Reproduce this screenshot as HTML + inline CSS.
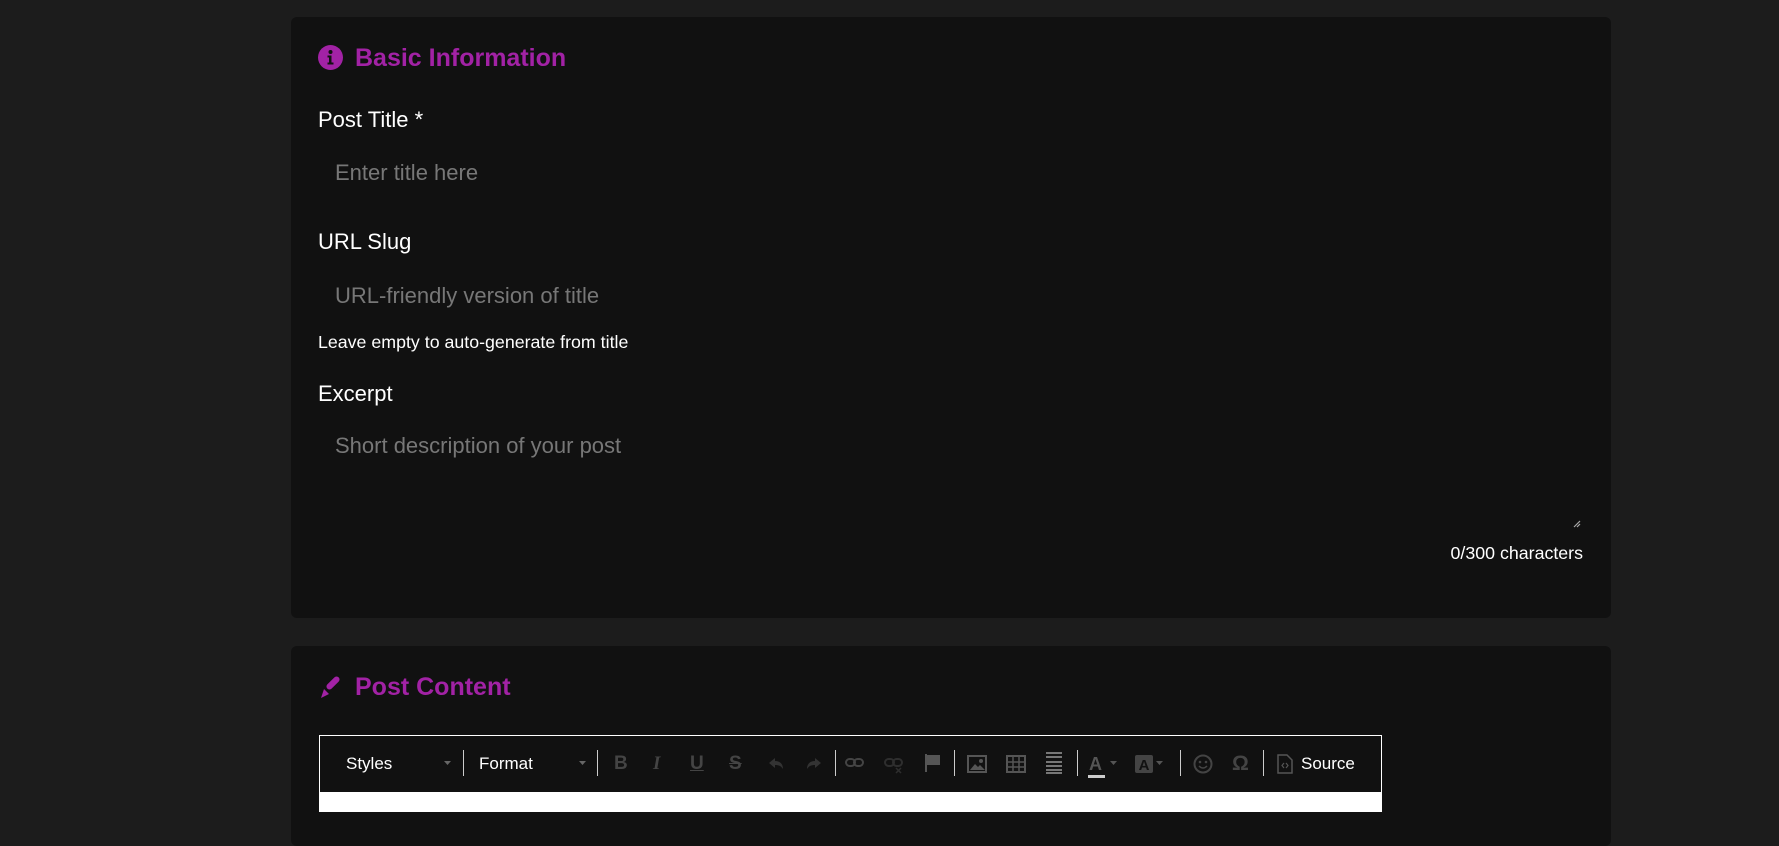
<!DOCTYPE html>
<html><head><meta charset="utf-8">
<style>
*{box-sizing:border-box;margin:0;padding:0}
html,body{width:1779px;height:797px;overflow:hidden;background:#1c1c1c;font-family:"Liberation Sans",Arial,sans-serif}
.card{position:absolute;left:291px;width:1320px;background:#111;border-radius:6px}
.h{position:absolute;left:27px;color:#a222a5;font-weight:bold;font-size:25px;line-height:28px}
.abs{position:absolute;white-space:nowrap}
.lbl{color:#fff;font-size:22px;left:27px}
.ph{color:#777;font-size:22px;left:44px}
.tb{position:absolute;left:28px;top:89px;width:1063px;height:60px;border-top:1px solid #fff;border-left:1px solid #fff;border-right:1px solid #fff;background:#111}
.tb .t{position:absolute;top:0;height:56px;line-height:56px;font-size:17px;color:#fff}
.sep{position:absolute;top:14px;width:1px;height:26px;background:#ccc}
.ic{position:absolute;top:16px}
.white{position:absolute;left:28px;top:146px;width:1063px;height:20px;background:#fff}
</style></head><body>
<div class="card" style="top:17px;height:601px">
  <svg class="abs" style="left:27px;top:28px" width="25" height="25" viewBox="0 0 25 25"><circle cx="12.5" cy="12.5" r="12.5" fill="#a222a5"/><circle cx="12.5" cy="7" r="2" fill="#111"/><path d="M9.5 10.5h4v7h2v2h-6v-2h1.5v-5h-1.5z" fill="#111"/></svg>
  <div class="h" style="top:27px;left:64px">Basic Information</div>
  <div class="abs lbl" style="top:90px">Post Title *</div>
  <div class="abs ph" style="top:143px">Enter title here</div>
  <div class="abs lbl" style="top:212px">URL Slug</div>
  <div class="abs ph" style="top:266px">URL-friendly version of title</div>
  <div class="abs" style="left:27px;top:315px;color:#fff;font-size:17.8px">Leave empty to auto-generate from title</div>
  <div class="abs lbl" style="top:364px">Excerpt</div>
  <div class="abs ph" style="top:416px">Short description of your post</div>
  <svg class="abs" style="left:1282px;top:503px" width="8" height="8"><path d="M1 7L7 1M4 7L7 4" stroke="#aaa" stroke-width="1.2"/></svg>
  <div class="abs" style="right:28px;top:526px;color:#fff;font-size:17.8px">0/300 characters</div>
</div>
<div class="card" style="top:646px;height:200px">
  <svg class="abs" style="left:27px;top:28px" width="26" height="26" viewBox="0 0 26 26"><rect x="12" y="1" width="6" height="16" rx="3" transform="rotate(45 15 9)" fill="#a222a5"/><path d="M3 24l3-9 5 5z" fill="#a222a5"/><path d="M9 16l3 3" stroke="#111" stroke-width="1.5"/></svg>
  <div class="h" style="top:27px;left:64px">Post Content</div>
  <div class="tb">
    <div class="t" style="left:26px">Styles</div>
    <svg class="ic" style="left:124px;top:25px" width="7" height="5"><path d="M0 0h7L3.5 4z" fill="#666"/></svg>
    <div class="sep" style="left:143px"></div>
    <div class="t" style="left:159px">Format</div>
    <svg class="ic" style="left:259px;top:25px" width="7" height="5"><path d="M0 0h7L3.5 4z" fill="#666"/></svg>
    <div class="sep" style="left:277px"></div>
    <div class="t" style="left:294px;color:#444;font-weight:bold;font-size:19px">B</div>
    <div class="t" style="left:333px;color:#444;font-style:italic;font-weight:bold;font-size:19px;font-family:'Liberation Serif',serif">I</div>
    <div class="t" style="left:370px;color:#444;font-weight:bold;font-size:19px;text-decoration:underline">U</div>
    <div class="t" style="left:409px;color:#444;font-weight:bold;font-size:19px;text-decoration:line-through">S</div>
    <svg class="ic" style="left:447px;top:20px" width="18" height="16"><path d="M2 7l6-5v3c5 0 8 3 8 8-2-3-4-4-8-4v3z" fill="#333"/></svg>
    <svg class="ic" style="left:485px;top:20px" width="18" height="16"><path d="M16 7l-6-5v3c-5 0-8 3-8 8 2-3 4-4 8-4v3z" fill="#333"/></svg>
    <div class="sep" style="left:515px"></div>
    <svg class="ic" style="left:525px;top:20px" width="20" height="14"><rect x="1" y="3" width="9" height="7" rx="3.5" stroke="#444" stroke-width="2" fill="none"/><rect x="9" y="3" width="9" height="7" rx="3.5" stroke="#444" stroke-width="2" fill="none"/></svg>
    <svg class="ic" style="left:564px;top:20px" width="20" height="18"><rect x="1" y="3" width="9" height="7" rx="3.5" stroke="#2e2e2e" stroke-width="2" fill="none"/><rect x="9" y="3" width="9" height="7" rx="3.5" stroke="#2e2e2e" stroke-width="2" fill="none"/><path d="M12 12l5 5M17 12l-5 5" stroke="#2e2e2e" stroke-width="1.5"/></svg>
    <svg class="ic" style="left:604px;top:17px" width="18" height="20"><path d="M2 1v18" stroke="#555" stroke-width="2"/><path d="M3 2h13v10H3z" fill="#555"/></svg>
    <div class="sep" style="left:634px"></div>
    <svg class="ic" style="left:647px;top:19px" width="20" height="18"><rect x="1" y="1" width="18" height="16" stroke="#555" stroke-width="2" fill="none"/><path d="M3 15l5-6 3 3 2-2 5 5z" fill="#555"/><circle cx="14" cy="6" r="2" fill="#555"/></svg>
    <svg class="ic" style="left:686px;top:19px" width="20" height="18"><rect x="1" y="1" width="18" height="16" stroke="#555" stroke-width="2" fill="none"/><path d="M1 7h18M1 12h18M7 1v16M13 1v16" stroke="#555" stroke-width="1.5"/></svg>
    <svg class="ic" style="left:725px;top:15px" width="18" height="24"><path d="M1 2h16M1 6h16M1 11h16M1 15h16M1 19h16M1 22h16" stroke="#777" stroke-width="2"/></svg>
    <div class="sep" style="left:757px"></div>
    <div class="t" style="left:769px;color:#555;font-weight:bold;font-size:18px">A</div>
    <div style="position:absolute;left:768px;top:39px;width:17px;height:3px;background:#ccc"></div>
    <svg class="ic" style="left:790px;top:25px" width="7" height="5"><path d="M0 0h7L3.5 4z" fill="#555"/></svg>
    <svg class="ic" style="left:815px;top:19px" width="18" height="18"><rect width="18" height="18" rx="2" fill="#444"/><text x="9" y="15" text-anchor="middle" font-size="15" font-weight="bold" fill="#111" font-family="Liberation Sans">A</text></svg>
    <svg class="ic" style="left:836px;top:25px" width="7" height="5"><path d="M0 0h7L3.5 4z" fill="#555"/></svg>
    <div class="sep" style="left:860px"></div>
    <svg class="ic" style="left:873px;top:18px" width="20" height="20"><circle cx="10" cy="10" r="8.5" stroke="#444" stroke-width="2" fill="none"/><circle cx="7" cy="8" r="1.3" fill="#444"/><circle cx="13" cy="8" r="1.3" fill="#444"/><path d="M6 12q4 4 8 0" stroke="#444" stroke-width="1.5" fill="none"/></svg>
    <div class="t" style="left:912px;color:#444;font-size:21px;font-weight:bold">Ω</div>
    <div class="sep" style="left:943px"></div>
    <svg class="ic" style="left:957px;top:18px" width="16" height="20"><path d="M1 1h9l5 5v13H1z" stroke="#555" stroke-width="1.5" fill="none"/><path d="M7 9l-2 2.5 2 2.5M9 9l2 2.5-2 2.5" stroke="#555" stroke-width="1.2" fill="none"/></svg>
    <div class="t" style="left:981px">Source</div>
  </div>
  <div class="white"></div>
</div>
</body></html>
